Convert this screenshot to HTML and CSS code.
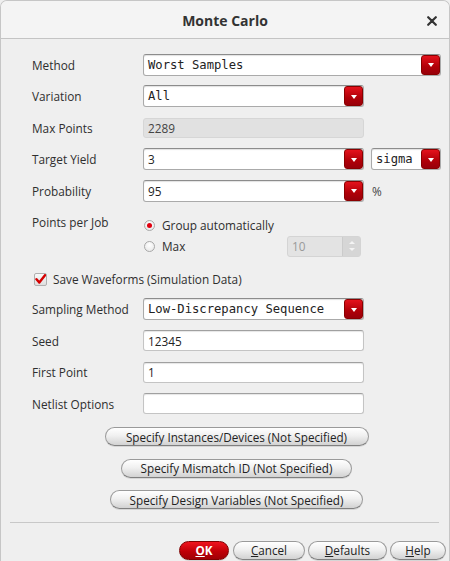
FILE: index.html
```html
<!DOCTYPE html>
<html>
<head>
<meta charset="utf-8">
<link rel="stylesheet" href="styles.css">
</head>
<body>
<div class="win">
  <div class="titlebar">
    <span class="title">Monte Carlo</span>
    <span class="close"><svg width="10" height="10" viewBox="0 0 10 10"><path d="M1.2 1.2 L8.8 8.8 M8.8 1.2 L1.2 8.8" stroke="#333" stroke-width="2.2" stroke-linecap="round"/></svg></span>
  </div>
  <div class="content">
    <div class="row">
      <span class="label">Method</span>
      <div class="combo w-wide"><span class="mono">Worst Samples</span><span class="arrow"></span></div>
    </div>
    <div class="row">
      <span class="label">Variation</span>
      <div class="combo w-std"><span class="mono">All</span><span class="arrow"></span></div>
    </div>
    <div class="row">
      <span class="label">Max Points</span>
      <div class="field disabled w-std">2289</div>
    </div>
    <div class="row">
      <span class="label">Target Yield</span>
      <div class="combo w-std"><span class="sans">3</span><span class="arrow"></span></div>
      <div class="combo w-sigma"><span class="mono">sigma</span><span class="arrow"></span></div>
    </div>
    <div class="row">
      <span class="label">Probability</span>
      <div class="combo w-std"><span class="sans">95</span><span class="arrow"></span></div>
      <span class="unit">%</span>
    </div>
    <div class="ppj">
      <span class="label ppj-label">Points per Job</span>
      <div class="radios">
        <div class="radio-line"><span class="radio on"></span><span class="rtext">Group automatically</span></div>
        <div class="radio-line"><span class="radio"></span><span class="rtext max">Max</span>
          <div class="spin"><span class="spin-val">10</span><span class="spin-btns"><span class="up"></span><span class="dn"></span></span></div>
        </div>
      </div>
    </div>
    <div class="row check-row">
      <span class="check"><svg width="11" height="11" viewBox="0 0 11 11"><path d="M1.5 5.2 L4.3 8.6 L10 1.2" fill="none" stroke="#d40000" stroke-width="2.4" stroke-linecap="round" stroke-linejoin="round"/></svg></span>
      <span class="ctext">Save Waveforms (Simulation Data)</span>
    </div>
    <div class="row">
      <span class="label">Sampling Method</span>
      <div class="combo w-std"><span class="mono">Low-Discrepancy Sequence</span><span class="arrow"></span></div>
    </div>
    <div class="row">
      <span class="label">Seed</span>
      <div class="field w-std">12345</div>
    </div>
    <div class="row">
      <span class="label">First Point</span>
      <div class="field w-std">1</div>
    </div>
    <div class="row">
      <span class="label">Netlist Options</span>
      <div class="field w-std"></div>
    </div>
    <div class="btn-row first"><button class="pill b1">Specify Instances/Devices (Not Specified)</button></div>
    <div class="btn-row"><button class="pill b2">Specify Mismatch ID (Not Specified)</button></div>
    <div class="btn-row"><button class="pill b3">Specify Design Variables (Not Specified)</button></div>
  </div>
  <div class="sep"></div>
  <div class="footer">
    <button class="pill ok"><u>O</u>K</button>
    <button class="pill f-cancel"><u>C</u>ancel</button>
    <button class="pill f-def"><u>D</u>efaults</button>
    <button class="pill f-help"><u>H</u>elp</button>
  </div>
</div>
</body>
</html>
```
FILE: styles.css
```css
html, body {
  margin: 0;
  padding: 0;
  background: #efefef;
}
body {
  font-family: "Open Sans", "Noto Sans", sans-serif;
  font-size: 11.8px;
  color: #2e2e2e;
}
.win {
  width: 450px;
  height: 561px;
  box-sizing: border-box;
  border: 1px solid #c6c6c6;
  border-bottom: none;
  border-radius: 7px 7px 0 0;
  background: #efefef;
  overflow: hidden;
}
.titlebar {
  height: 37px;
  border-bottom: 1px solid #c4c4c4;
  background: #f4f4f4;
  display: flex;
  align-items: center;
  justify-content: center;
  position: relative;
}
.title {
  font-weight: bold;
  font-size: 14px;
  color: #333;
  margin-top: 2px;
}
.close {
  position: absolute;
  right: 12px;
  top: 15px;
  width: 10px;
  height: 10px;
}
.close svg { display: block; }
.content {
  padding: 10px 8px 0 31px;
}
.row {
  height: 31.5px;
  display: flex;
  align-items: center;
}
.label {
  width: 111px;
  flex: none;
}
.combo {
  height: 22px;
  box-sizing: border-box;
  background: #fff;
  border: 1px solid #aaa;
  border-top-color: #8c8c8c;
  border-radius: 3px;
  box-shadow: inset 0 1px 1px rgba(0,0,0,0.12);
  display: flex;
  align-items: center;
  padding-left: 4px;
  flex: none;
}
.w-wide { width: 298px; }
.w-std { width: 221px; }
.w-sigma { width: 70px; margin-left: 7px; }
.mono {
  font-family: "DejaVu Sans Mono", monospace;
  font-size: 12.2px;
  color: #222;
  flex: 1;
  white-space: nowrap;
}
.sans {
  flex: 1;
  color: #222;
}
.arrow {
  flex: none;
  width: 19px;
  height: 20px;
  box-sizing: border-box;
  border-radius: 3px;
  border: 1px solid #8a0000;
  background: linear-gradient(#e4121c, #b00008 60%, #98000a);
  display: flex;
  align-items: center;
  justify-content: center;
}
.arrow::after {
  content: "";
  width: 0;
  height: 0;
  border-left: 3.5px solid transparent;
  border-right: 3.5px solid transparent;
  border-top: 4px solid #fff;
  margin-top: 1px;
}
.field {
  height: 21px;
  box-sizing: border-box;
  background: #fff;
  border: 1px solid #c4c4c4;
  border-top-color: #a0a0a0;
  border-radius: 3px;
  box-shadow: inset 0 1px 1px rgba(0,0,0,0.1);
  padding-left: 4px;
  display: flex;
  align-items: center;
  color: #222;
}
.field.disabled {
  background: #e1e1e1;
  border-color: #d6d6d6;
  box-shadow: none;
  color: #444;
  height: 20px;
}
.unit {
  margin-left: 8px;
  color: #444;
}
.ppj {
  display: flex;
  height: 50px;
}
.ppj-label {
  padding-top: 7px;
}
.radios {
  padding-top: 8px;
  display: flex;
  flex-direction: column;
}
.radio-line {
  height: 21px;
  display: flex;
  align-items: center;
}
.radio {
  width: 11px;
  height: 11px;
  box-sizing: border-box;
  margin-left: 1px;
  border-radius: 50%;
  border: 1px solid #a8a8a8;
  background: radial-gradient(circle at 50% 35%, #ffffff, #e4e4e4);
  display: flex;
  align-items: center;
  justify-content: center;
}
.radio.on::after {
  content: "";
  width: 5px;
  height: 5px;
  border-radius: 50%;
  background: #e00010;
}
.rtext {
  margin-left: 7px;
}
.rtext.max {
  width: 125px;
}
.spin {
  width: 74px;
  height: 21px;
  box-sizing: border-box;
  background: #e3e3e3;
  border: 1px solid #d4d4d4;
  border-radius: 3px;
  display: flex;
  align-items: center;
}
.spin-val {
  flex: 1;
  padding-left: 4px;
  color: #9a9a9a;
}
.spin-btns {
  width: 17px;
  height: 19px;
  background: #d6d6d6;
  border-left: 1px solid #cbcbcb;
  display: flex;
  flex-direction: column;
  align-items: center;
  justify-content: center;
  gap: 4px;
}
.up, .dn {
  width: 0;
  height: 0;
  border-left: 3px solid transparent;
  border-right: 3px solid transparent;
}
.up { border-bottom: 3px solid #f4f4f4; }
.dn { border-top: 3px solid #f4f4f4; }
.check-row {
  height: 28.5px;
  margin-top: 8.25px;
}
.check {
  width: 11px;
  height: 11px;
  margin-left: 2px;
  background: linear-gradient(#fafafa, #dedede);
  border: 1px solid #b0b0b0;
  border-radius: 2px;
  display: flex;
  align-items: center;
  justify-content: center;
}
.check svg { display: block; }
.ctext {
  margin-left: 6px;
}
.btn-row {
  height: 31.5px;
  display: flex;
  align-items: center;
  justify-content: center;
  width: 409px;
}
.btn-row.first { margin-top: 1.75px; }
.pill {
  font-family: "Open Sans", "Noto Sans", sans-serif;
  font-size: 11.7px;
  color: #222;
  height: 19px;
  padding: 0;
  box-sizing: border-box;
  border: 1px solid #9a9a9a;
  border-bottom-color: #808080;
  border-radius: 10px;
  background: linear-gradient(#ffffff, #f0f0f0 45%, #d2d2d2);
  box-shadow: 0 1px 0 rgba(0,0,0,0.1);
  display: flex;
  align-items: center;
  justify-content: center;
}
.b1 { width: 264px; }
.b2 { width: 231px; }
.b3 { width: 253px; }
.sep {
  height: 1px;
  background: #c8c8c8;
  margin: 6px 10px 0 9px;
}
.footer {
  display: flex;
  justify-content: flex-end;
  gap: 2px;
  padding: 18px 3px 0 0;
}
.footer .pill {
  height: 19px;
}
.ok {
  width: 50px;
  margin-right: 2px;
  background: linear-gradient(#f0141e, #c00008 55%, #a00006);
  border-color: #800000;
  color: #fff;
  font-weight: bold;
}
.f-cancel { width: 72px; }
.f-def { width: 79px; margin-left: 1px; }
.f-help { width: 56px; margin-left: 1px; }
```
